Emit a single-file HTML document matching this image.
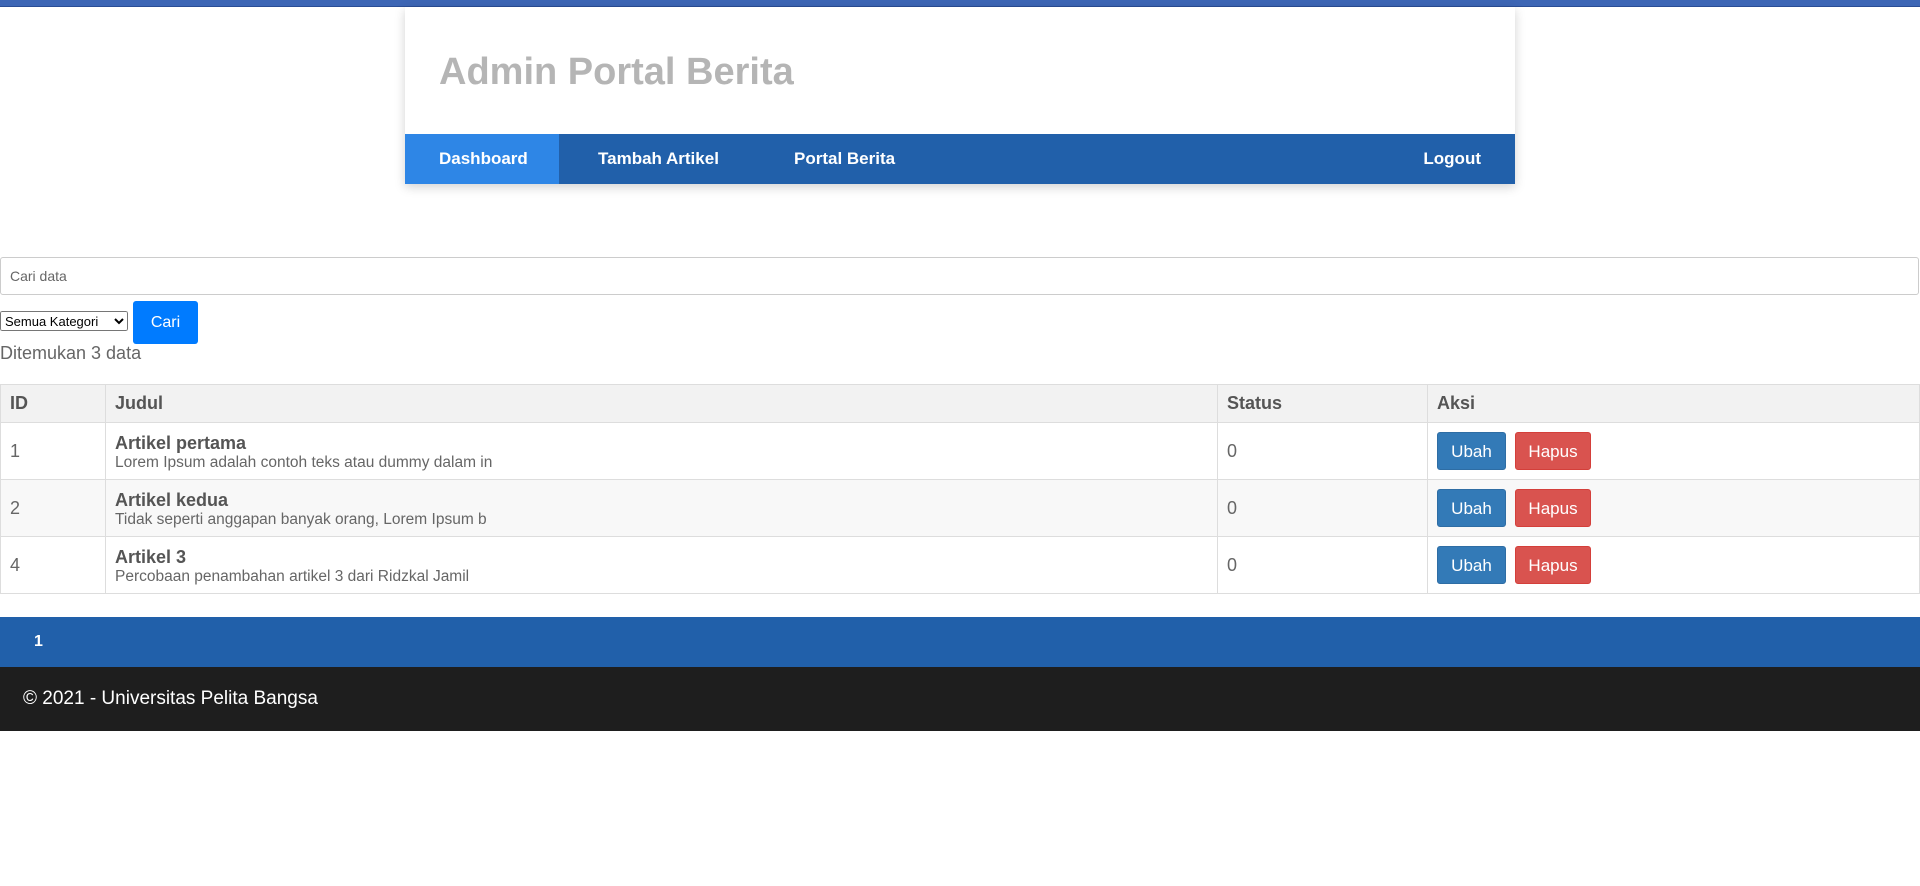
<!DOCTYPE html>
<html><head><meta charset="utf-8"><style>
*{box-sizing:border-box;margin:0;padding:0}
body{width:1920px;height:886px;background:#fff;font-family:"Liberation Sans",sans-serif;color:#5a5a5a;position:relative;overflow:hidden}
.top{position:absolute;left:0;top:0;width:1920px;height:7px;background:#3d66b5;border-bottom:1px solid #2a4d95}
.box{position:absolute;left:405px;top:7px;width:1110px;height:177px;background:#fff;box-shadow:0 3px 10px rgba(0,0,0,.18)}
.box h1{position:absolute;left:34px;top:44px;font-size:38px;font-weight:bold;color:#b5b5b5}
.nav{position:absolute;left:0;top:127px;width:1110px;height:50px;background:#2160aa}
.nav a{position:absolute;top:0;height:50px;line-height:50px;color:#fff;font-weight:bold;font-size:17px;text-decoration:none}
.search{position:absolute;left:0;top:257px;width:1919px;height:38px;border:1px solid #ccc;border-radius:3px;padding-left:9px;line-height:36px;font-size:14px;color:#666}
select{position:absolute;left:0;top:311px;width:128px;height:20px;font-size:13px;font-family:"Liberation Sans",sans-serif;color:#000}
.cari{position:absolute;left:133px;top:301px;width:65px;height:43px;background:#007bff;color:#fff;border-radius:3px;font-size:16px;text-align:center;line-height:43px}
.found{position:absolute;left:0;top:343px;font-size:18px;color:#666}
table{position:absolute;left:0;top:384px;width:1920px;border-collapse:collapse}
td,th{border:1px solid #ddd;text-align:left;padding:0 9px;vertical-align:middle}
th{background:#f2f2f2;height:38px;font-size:18px;font-weight:bold;color:#555}
td{height:57px;font-size:18px;color:#666}
tr.alt td{background:#f8f8f8}
td b{display:block;font-size:18px;color:#555;margin-top:2px}
td span{display:block;font-size:15.5px;color:#666}
.btn{display:inline-block;height:38px;line-height:38px;color:#fff;border-radius:3px;font-size:17px;text-align:center;vertical-align:middle}
.u{width:69px;background:#337ab7;border:1px solid #2e6da4}
.h{width:76px;background:#d9534f;border:1px solid #d43f3a;margin-left:9px}
.pag{position:absolute;left:0;top:617px;width:1920px;height:50px;background:#2160aa;color:#fff;font-weight:bold;font-size:16px;line-height:50px;padding-left:34px}
.foot{position:absolute;left:0;top:667px;width:1920px;height:64px;background:#1e1e1e;color:#fff;font-size:19px;line-height:64px;padding-left:23px}
</style></head><body>
<div class="top"></div>
<div class="box"><h1>Admin Portal Berita</h1>
<div class="nav">
<a style="left:0;width:154px;background:#2e86e6;padding-left:34px">Dashboard</a>
<a style="left:193px">Tambah Artikel</a>
<a style="left:389px">Portal Berita</a>
<a style="right:34px">Logout</a>
</div></div>
<div class="search">Cari data</div>
<select><option>Semua Kategori</option></select>
<div class="cari">Cari</div>
<div class="found">Ditemukan 3 data</div>
<table>
<tr><th style="width:105px">ID</th><th style="width:1112px">Judul</th><th style="width:210px">Status</th><th>Aksi</th></tr>
<tr><td>1</td><td><b>Artikel pertama</b><span class="d">Lorem Ipsum adalah contoh teks atau dummy dalam in</span></td><td>0</td><td><span class="btn u">Ubah</span><span class="btn h">Hapus</span></td></tr>
<tr class="alt"><td>2</td><td><b>Artikel kedua</b><span>Tidak seperti anggapan banyak orang, Lorem Ipsum b</span></td><td>0</td><td><span class="btn u">Ubah</span><span class="btn h">Hapus</span></td></tr>
<tr><td>4</td><td><b>Artikel 3</b><span>Percobaan penambahan artikel 3 dari Ridzkal Jamil</span></td><td>0</td><td><span class="btn u">Ubah</span><span class="btn h">Hapus</span></td></tr>
</table>
<div class="pag">1</div>
<div class="foot">© 2021 - Universitas Pelita Bangsa</div>
</body></html>
